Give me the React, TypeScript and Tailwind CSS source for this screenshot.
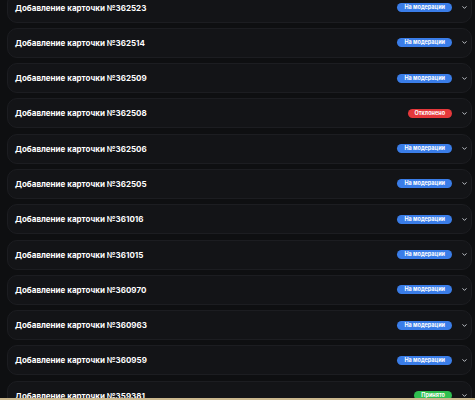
import { ChevronDown } from 'lucide-react'

type Status = 'moderation' | 'rejected' | 'accepted'

const items: { id: number; status: Status }[] = [
  { id: 362523, status: 'moderation' },
  { id: 362514, status: 'moderation' },
  { id: 362509, status: 'moderation' },
  { id: 362508, status: 'rejected' },
  { id: 362506, status: 'moderation' },
  { id: 362505, status: 'moderation' },
  { id: 361016, status: 'moderation' },
  { id: 361015, status: 'moderation' },
  { id: 360970, status: 'moderation' },
  { id: 360963, status: 'moderation' },
  { id: 360959, status: 'moderation' },
  { id: 359381, status: 'accepted' },
]

const badgeBase = 'h-[9px] px-[7px] rounded-full text-white text-[5.5px] font-bold leading-[9px] whitespace-nowrap'

function Badge({ status }: { status: Status }) {
  if (status === 'rejected') {
    return <span className={badgeBase + ' bg-[#e5383b]'}>Отклонено</span>
  }
  if (status === 'accepted') {
    return <span className={badgeBase + ' bg-[#2fbf4f]'}>Принято</span>
  }
  return <span className={badgeBase + ' bg-[#3a7de8]'}>На модерации</span>
}

export default function App() {
  return (
    <div className="h-[400px] overflow-hidden bg-[#0e0f11] font-['Inter',sans-serif]">
      <div className="flex flex-col gap-[5.3px] pl-[7px] pr-[3px] -mt-[7.5px]">
        {items.map((item) => (
          <div
            key={item.id}
            className="h-[30px] shrink-0 flex items-center rounded-[10px] border border-[#1c1d21] bg-[#131417] pl-[7px] pr-[3px]"
          >
            <span className="flex-1 text-white text-[8px] font-bold">
              Добавление карточки №{item.id}
            </span>
            <Badge status={item.status} />
            <ChevronDown className="ml-[9px] w-[7px] h-[7px] text-gray-300" strokeWidth={3} />
          </div>
        ))}
      </div>
      <div className="fixed left-0 right-0 bottom-0 h-[2px] bg-[#cbb88e]" />
    </div>
  )
}
